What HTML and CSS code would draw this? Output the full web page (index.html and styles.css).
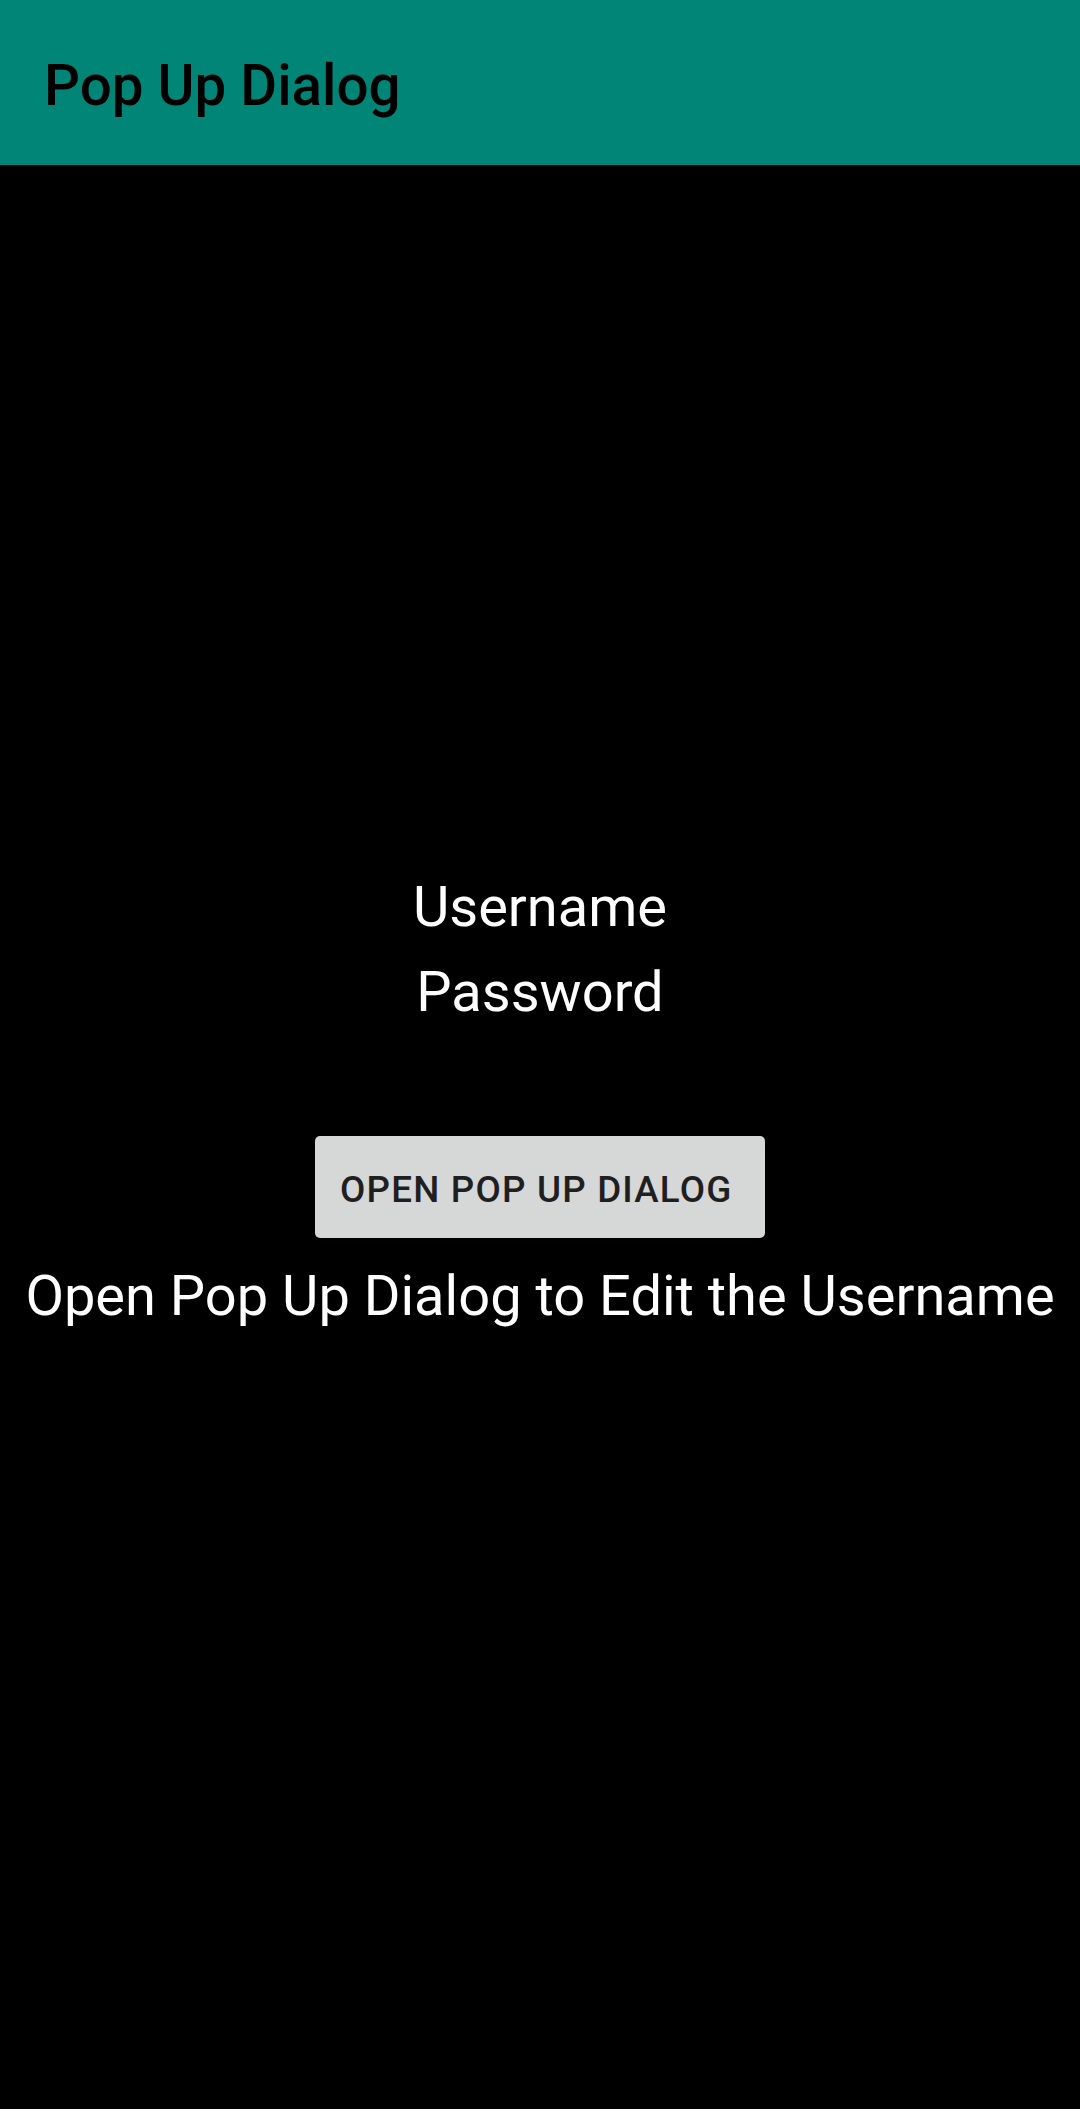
FILE: index.html
```html
<!DOCTYPE html>
<html>
<head>
<meta charset="utf-8">
<link rel="stylesheet" href="styles.css">
</head>
<body>
<header class="appbar"><h1 class="title">Pop Up Dialog</h1></header>
<main class="content">
  <div class="label username">Username</div>
  <div class="label password">Password</div>
  <button class="open-btn">OPEN POP UP DIALOG</button>
  <div class="label hint">Open Pop Up Dialog to Edit the Username</div>
</main>
</body>
</html>
```
FILE: styles.css
```css
html, body {
  margin: 0;
  padding: 0;
  background: #000;
  width: 1080px;
  height: 2109px;
  font-family: Roboto, "Noto Sans", sans-serif;
}
.appbar {
  height: 165px;
  background: #008577;
  display: flex;
  align-items: center;
  padding-left: 44px;
  box-sizing: border-box;
}
.title {
  margin: 0;
  font-size: 56.5px;
  font-weight: 500;
  color: #000;
  line-height: 1;
  padding-top: 8px;
}
.content {
  display: flex;
  flex-direction: column;
  align-items: center;
}
.label {
  color: #fff;
  font-size: 56px;
  line-height: 66px;
  font-weight: 400;
}
.username { margin-top: 709px; }
.password { margin-top: 19px; }
.open-btn {
  margin-top: 111px;
  width: 450px;
  height: 102px;
  background: #d6d7d7;
  border: none;
  border-radius: 5px;
  font-family: Roboto, sans-serif;
  font-size: 36.75px;
  font-weight: 500;
  color: #1f1f1f;
  letter-spacing: 1.2px;
  text-align: left;
  padding: 5px 0 0 25px;
}
.hint { margin-top: 25px; }
```
